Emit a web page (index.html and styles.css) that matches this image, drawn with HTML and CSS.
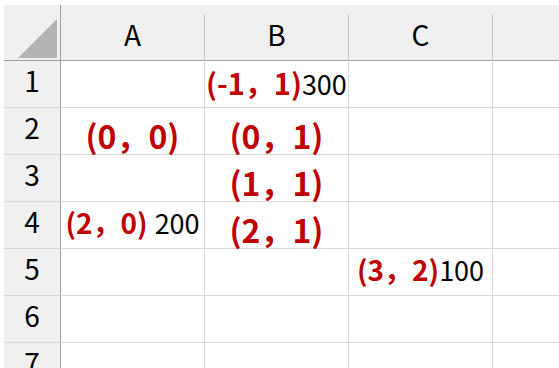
FILE: index.html
```
<!DOCTYPE html>
<html lang="ja">
<head>
<meta charset="utf-8">
<link rel="stylesheet" href="styles.css">
</head>
<body>
<div class="sheet">
  <div class="hd corner"><svg width="39" height="39" viewBox="0 0 39 39"><polygon points="39,0 39,39 0,39" fill="#b4b4b4"/></svg></div>
  <div class="hd col">A</div>
  <div class="hd col">B</div>
  <div class="hd col">C</div>
  <div class="hd col"></div>

  <div class="rh">1</div>
  <div class="c"></div>
  <div class="c left"><span class="red sm1">(-1，1)</span><span class="num">300</span></div>
  <div class="c"></div>
  <div class="c"></div>

  <div class="rh">2</div>
  <div class="c big"><span class="red lg">(0，0)</span></div>
  <div class="c big"><span class="red lg">(0，1)</span></div>
  <div class="c"></div>
  <div class="c"></div>

  <div class="rh">3</div>
  <div class="c"></div>
  <div class="c big"><span class="red lg">(1，1)</span></div>
  <div class="c"></div>
  <div class="c"></div>

  <div class="rh">4</div>
  <div class="c mid"><span class="red sm">(2，0)</span><span class="num spaced">200</span></div>
  <div class="c big"><span class="red lg">(2，1)</span></div>
  <div class="c"></div>
  <div class="c"></div>

  <div class="rh">5</div>
  <div class="c"></div>
  <div class="c"></div>
  <div class="c mid"><span class="red sm">(3，2)</span><span class="num">100</span></div>
  <div class="c"></div>

  <div class="rh">6</div>
  <div class="c"></div>
  <div class="c"></div>
  <div class="c"></div>
  <div class="c"></div>

  <div class="rh">7</div>
  <div class="c"></div>
  <div class="c"></div>
  <div class="c"></div>
  <div class="c"></div>
</div>
</body>
</html>
```
FILE: styles.css
```
html, body {
  margin: 0;
  padding: 0;
  background: #fff;
  overflow: hidden;
}
body {
  padding: 5px 0 0 4px;
  font-family: "Noto Sans CJK JP", "Noto Sans", sans-serif;
  color: #000;
}
.sheet {
  display: grid;
  grid-template-columns: 57px 144px 144px 144px 144px;
  grid-template-rows: 56px repeat(7, 47px);
  width: 633px;
}
.hd {
  background: #f0f0f0;
  border-bottom: 1px solid #9f9f9f;
  box-sizing: border-box;
  position: relative;
}
.corner {
  border-right: 1px solid #9f9f9f;
  display: flex;
  align-items: flex-end;
  justify-content: flex-end;
  padding: 0 3px 2px 0;
}
.corner svg { display: block; }
.col {
  display: flex;
  align-items: flex-end;
  justify-content: center;
  font-size: 28px;
  line-height: 1;
  padding-bottom: 12px;
  border-right: 1px solid transparent;
}
.col::after {
  content: "";
  position: absolute;
  right: -1px;
  top: 9px;
  bottom: 0;
  width: 1px;
  background: #c4c4c4;
}
.rh {
  background: #f0f0f0;
  border-right: 1px solid #9f9f9f;
  border-bottom: 1px solid #d8d8d8;
  box-sizing: border-box;
  display: flex;
  align-items: flex-end;
  justify-content: center;
  font-size: 28px;
  line-height: 1;
  padding-bottom: 13px;
}
.c {
  border-right: 1px solid #dadada;
  border-bottom: 1px solid #dadada;
  box-sizing: border-box;
  display: flex;
  align-items: baseline;
  justify-content: center;
  white-space: nowrap;
  line-height: 1;
}
.c.left {
  justify-content: flex-start;
  padding-left: 1px;
  padding-top: 7px;
}
.c.big { padding-top: 11px; }
.c.mid { padding-top: 6px; }
.red {
  color: #c00000;
  font-weight: 700;
}
.lg { font-size: 32px; }
.sm { font-size: 28px; }
.sm1 { font-size: 29px; }
.num {
  font-size: 27px;
  font-weight: 400;
}
.spaced { margin-left: 7px; }
```
